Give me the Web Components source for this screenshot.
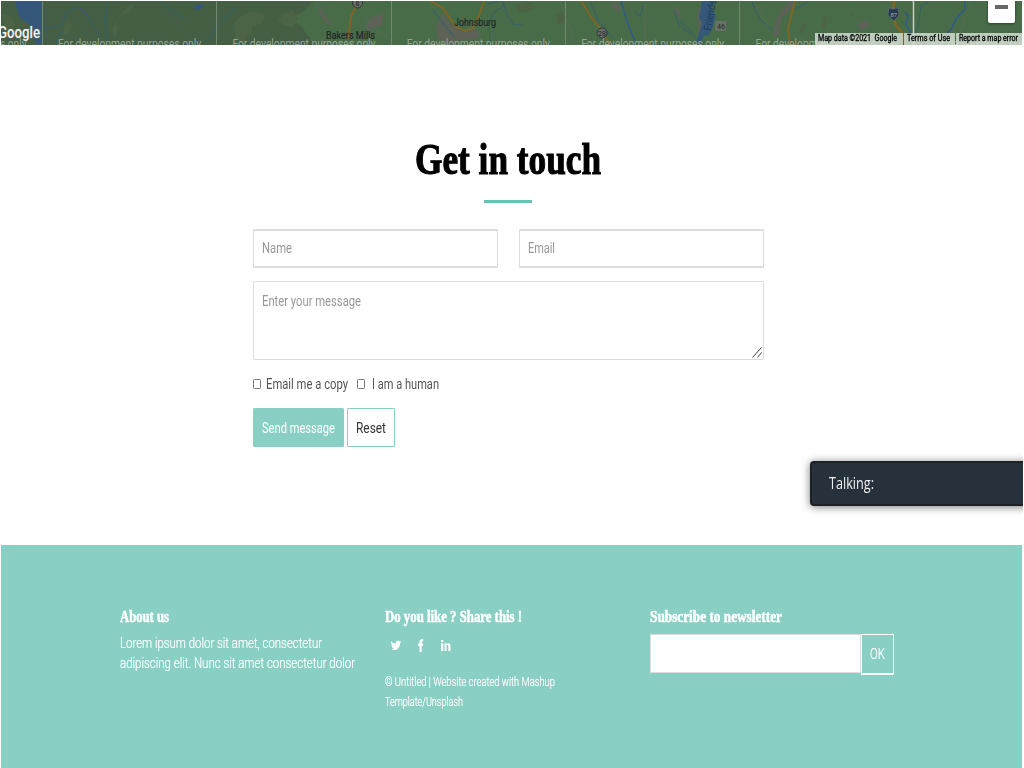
<!DOCTYPE html>
<html lang="en"><head><meta charset="utf-8"><title>Get in touch</title>
<style>html,body{margin:0;background:#fff;overflow:hidden}</style></head>
<body><contact-page></contact-page>
<script>
const define = (name, html, setup) => customElements.define(name, class extends HTMLElement {
  connectedCallback() {
    if (this.shadowRoot) return;
    const t = document.createElement('template');
    t.innerHTML = html;
    this.attachShadow({mode: 'open'}).append(t.content.cloneNode(true));
    if (setup) setup(this, this.shadowRoot);
  }
});

/* One line of text condensed or widened to the width in the "w" attribute. */
define('fit-text', `<style>
:host{display:block;white-space:nowrap;flex:none}
span{display:inline-block;transform-origin:0 50%}
</style><span><slot></slot></span>`, (host, root) => {
  const span = root.querySelector('span'), w = +host.getAttribute('w');
  host.style.width = w + 'px';
  span.style.transform = `scaleX(${w / span.getBoundingClientRect().width})`;
});

define('map-strip', `<style>
:host{display:block;position:relative;height:44px;overflow:hidden;background:#486c48;font-weight:400}
svg{display:block}
.zoom{position:absolute;right:7px;top:-14px;width:27px;height:36px;background:#fff;border-radius:2px;box-shadow:0 1px 3px #0006}
.zoom i{display:block;width:13px;height:4px;margin:18px 0 0 7px;background:#666}
.legal{position:absolute;right:0;bottom:0;display:flex;gap:1px;height:12px;font:9px/10px Roboto,"Liberation Sans",sans-serif;color:#000;-webkit-text-stroke:.3px #000}
.legal div{background:rgba(213,224,213,.82);padding:0 3px}
</style>
<svg width="1021" height="44" viewBox="1 1 1021 44" font-family='Roboto,"Liberation Sans",sans-serif'>
<defs><filter id="b"><feGaussianBlur stdDeviation=".6"/></filter></defs>
<path fill="#445f44" d="M0 0H315L303 12 290 18 302 27 314 45H0z"/>
<g filter="url(#b)">
<path fill="#4d6444" d="M238 18l14-7 14 4-5 9-8 2-2 7-8 8-12 3 5-9-3-8zM283 14l10-3 5 7-6 9-9-2-5-4zM62 32l5-10 5 3-5 11zM121 14l7-7 6-4-3 8-7 4zM2 14l10 3 3 9-9 4zM112 30l4-9 2 8-3 7zM516 5l12-3 9 4-11 7-8-1zM556 15l10-6-1 12-8 4zM822 25l4-12 2 5-4 12zM802 24l5-2-4 12-5-2zM850 15l3-3-2 8z"/>
<g fill="#5d6257"><path d="M315 1l7 9 5 8 6 8-7-3-5-7zM370 18l14-5-2 12-12 5-5-2zM436 27l7-15 7 12 14 8 10-4 6 6-5 5-13 1-9 5-15-6zM611 3l6-1 4 10-6-1zM674 8l5 1 2 10-5-4zM779 14l9-12 6-1-2 8-11 9-1 16-7 4 2-17zM859 22l8-2 3 4-8 7-4-3zM697 14l6-12 3 0-3 14 2 15-6 4z"/></g>
<path fill="#35597a" d="M15 1h27v43h-6l-7-20-10-7zM194 6l6-2 4 1-3 4-6 1zM702 1h12l-2 8 4 7-4 13-4 7-4-1-3 9-5-1 6-20-3-5z"/>
<g fill="none" stroke="#315d72" stroke-width=".9"><path d="M42 29l10-2 10-2 4-12 12-7 10 10 7 12 5 10M107 1l-2 21 2 20M161 1l10 9 11 8 11-11M237 7l-13 12-10 11-7 12M55 44l9-15M680 21l10 9 8 12M433 10l13 17 9 11M488 4l14-4 6 17 6 8 9-1M490 44l-1-22 5-10 11-7M590 2l8 18 15 18M635 12l5 5 3-12M674 10l5 15 12 10M752 2l7 16 14 13M795 9l13-7M905 24l-8-8M910 43l8-16 3-21 8-5"/></g>
<path fill="none" stroke="#2f5b86" stroke-width="1.600" d="M621 1l6 20 5 13 4 10M965 1v8l-9 10-4 9-9 10M905 12l3 4-2 9 6 9 2 10"/>
<g fill="none" stroke="#596956"><path d="M364 16l13 15 14 9M466 23l11 8 7 12M645 7v34M755 4l13 22M560 1l15 42M970 4l-12 34"/></g>
<g fill="none" stroke="#826524" stroke-width="1.8"><path d="M356 6l-5 11-3 21M430 1l13 7 12 18 10 5 8-3 7-15 4-12M581 1l12 19 9 10 8 15M795 1l-3 12-4 16 2 15"/><path stroke-width="2.6" d="M894 1l-1 13 3 11 7 9 2 11"/></g>
</g>
<path fill="none" stroke="#708970" d="M42.5 1v44M216.500 1v44M391.500 1v44M565.500 1v44M739.500 1v44"/><path stroke="#c4cec4" stroke-width="1.500" d="M913.500 1v44"/>
<g fill="#696d6a" stroke="#303633"><circle cx="357.500" cy="3" r="5"/><circle cx="602" cy="33" r="5"/></g>
<path fill="#263b53" stroke="#637078" stroke-width=".6" d="M889 8l4 1 5-1 1 7-5 6-6-6z"/>
<rect x="715" y="21" width="11" height="10" fill="#697069"/>
<g font-size="7" fill="#222b28"><text x="355.500" y="5.500">8</text><text x="598" y="36" textLength="8">28</text><text x="717" y="29">46</text><text x="890.500" y="17" fill="#a2aaa6" font-size="6">87</text></g>
<g font-size="11" fill="#222826" stroke="#222826" stroke-width=".2"><text x="326" y="39" textLength="49" lengthAdjust="spacingAndGlyphs">Bakers Mills</text><text x="454" y="26" textLength="42" lengthAdjust="spacingAndGlyphs">Johnsburg</text><text transform="translate(711 31) rotate(-80)" fill="#203e58" stroke="none" textLength="31" lengthAdjust="spacingAndGlyphs">Friends</text></g>
<g id="w" font-size="13" fill="#a3b2a3" fill-opacity=".85"></g>
<text x="-2" y="38" font-size="16.500" font-weight="500" fill="#f2f3f2" stroke="#5f6f61" stroke-width=".8" paint-order="stroke" textLength="42" lengthAdjust="spacingAndGlyphs">Google</text>
</svg>
<div class="legal"><div style="padding-right:6px"><fit-text w="79">Map data ©2021&nbsp; Google</fit-text></div><div style="padding-right:5px"><fit-text w="43">Terms of Use</fit-text></div><div style="padding-right:4px"><fit-text w="59">Report a map error</fit-text></div></div>
<div class="zoom"><i></i></div>`, (host, root) => {
  let s = '';
  for (let i = -1; i < 6; i++) s += `<text x="${58 + i * 174.4}" y="48" textLength="143" lengthAdjust="spacingAndGlyphs">For development purposes only</text>`;
  root.getElementById('w').innerHTML = s;
});

define('text-field', `<style>
:host{display:block;box-sizing:border-box;height:39px;border:1px solid #ddd;border-width:2px 1px;border-radius:1px;background:#fff;padding:0 8px;font-size:14.5px;line-height:36px;color:#999}
:host([area]){height:79px;border-width:1px;line-height:40px;position:relative}
svg{display:none;position:absolute;right:1px;bottom:1px}
:host([area]) svg{display:block}
</style><slot></slot><svg width="10" height="11" fill="none" stroke="#444"><path d="M.5 10.500L9.500.5M5.500 10.500l4-5"/></svg>`);

define('check-option', `<style>
:host{display:flex;align-items:center;color:#555}
i{box-sizing:border-box;width:8px;height:10px;border:1px solid #777;border-radius:1.5px;margin-right:var(--gap,5px)}
</style><i></i><slot></slot>`);

define('push-button', `<style>
:host{display:flex;box-sizing:border-box;height:39px;padding:0 8px;border:1px solid #8acfc4;border-radius:1px;line-height:40px;color:#333}
:host([primary]){background:#8acfc4;color:#fff}
:host([ghost]){height:41px;border-color:#fff;border-bottom-width:2px;color:#fff}
</style><slot></slot>`);

define('contact-form', `<style>
:host{display:flex;flex-direction:column;align-items:center;height:500px;box-sizing:border-box;padding:87px 7px 0 0}
h1{margin:0;height:68px;font:bold 45px/54px "Liberation Serif",serif;color:#000;-webkit-text-stroke:1.1px #000}
hr{margin:0 0 26px;border:0;width:48px;height:3px;background:#68c3b5}
form{width:511px;margin-left:1px;font-size:14.5px;font-weight:400;display:flex;flex-direction:column}
.two{display:grid;grid-template-columns:245px 245px;gap:21px;margin-bottom:13px}
.checks{display:flex;gap:9px;height:20px;margin-top:14px}
.buttons{display:flex;gap:3px;margin-top:14px}
</style>
<h1><fit-text w="186">Get in touch</fit-text></h1><hr>
<form><div class="two"><text-field><fit-text w="30">Name</fit-text></text-field><text-field><fit-text w="27">Email</fit-text></text-field></div>
<text-field area><fit-text w="99">Enter your message</fit-text></text-field>
<div class="checks"><check-option><fit-text w="82">Email me a copy</fit-text></check-option><check-option style="--gap:7px"><fit-text w="67">I am a human</fit-text></check-option></div>
<div class="buttons"><push-button primary><fit-text w="73">Send message</fit-text></push-button><push-button><fit-text w="30">Reset</fit-text></push-button></div></form>`);

define('page-footer', `<style>
:host{display:grid;grid-template-columns:265px 265px 244px;align-items:start;box-sizing:border-box;height:223px;padding:61px 0 0 119px;background:#8acfc4;color:#fff;font-size:14.5px;line-height:20px;-webkit-text-stroke:.2px #fff}
h4{margin:0;font:bold 16px/22px "Liberation Serif",serif;height:27px;-webkit-text-stroke:.5px #fff}
.about{padding-top:1px}
.social{display:flex;align-items:center;gap:15px;height:16px;margin:4px 0 19px 6px}
.small{font-size:12px}
.news{display:flex;align-items:flex-start;margin-top:1px}
.input{box-sizing:border-box;width:211px;height:39px;background:#fff;border:1px solid #ddd}
svg{display:block;fill:#fff}
</style>
<section><h4><fit-text w="49">About us</fit-text></h4><div class="about"><fit-text w="202">Lorem ipsum dolor sit amet, consectetur</fit-text><fit-text w="235">adipiscing elit. Nunc sit amet consectetur dolor</fit-text></div></section>
<section><h4><fit-text w="137">Do you like ? Share this !</fit-text></h4>
<div class="social">
<svg width="10" height="11" viewBox="0 0 10 11"><path d="M0 1c1.500 2 3 2.500 5 2.600C4.500.5 7.500-.3 8.500 1.300L10 .8 9.200 2.200 10 2 9 3.400C9 8 5 11.500 0 9.500c1.400 0 2.200-.3 3-1C1.500 8 1 7.500.9 6.700L2 6.600C.5 6 .2 5 .3 4.200l1 .3C.2 3.500-.2 2.300 0 1z"/></svg>
<svg width="10" height="13" viewBox="0 0 10 13"><path d="M3.500 13V7H2V4.600h1.500V3C3.500 1 4.500 0 6.200 0h1v2.300H6.500c-.6 0-.8.3-.8.9v1.400H7.200L7 7H5.700v6z"/></svg>
<svg width="10" height="12" viewBox="0 0 10 12"><path d="M0 4.300h2.200V12H0zM0 1h2.200v2H0zM3.500 4.300h2v1C7 3.500 9.500 4 9.500 7v5H7.300V7.500c0-2-1.800-2-1.800 0V12H3.500z"/></svg>
</div><div class="small"><fit-text w="170">© Untitled | Website created with Mashup</fit-text><fit-text w="78">Template/Unsplash</fit-text></div></section>
<section><h4><fit-text w="132">Subscribe to newsletter</fit-text></h4><div class="news"><div class="input"></div><push-button ghost><fit-text w="15">OK</fit-text></push-button></div></section>`);

define('talk-panel', `<style>
:host{position:absolute;left:810px;top:461px;width:220px;height:45px;box-sizing:border-box;border:2px solid #1d2123;border-radius:4px;background:#27313b;color:#eee;box-shadow:0 1px 8px #0008;padding-left:17px;font:16.5px/39px "Open Sans","Noto Sans",sans-serif}
</style><fit-text w="45">Talking:</fit-text>`);

define('contact-page', `<style>
:host{display:block;position:relative;box-sizing:border-box;width:1023px;height:768px;padding:1px 1px 0 1px;overflow:hidden;background:#fff;font-family:Roboto,"Liberation Sans",sans-serif;font-weight:300}
</style><map-strip></map-strip><contact-form></contact-form><page-footer></page-footer><talk-panel></talk-panel>`);
</script></body></html>
